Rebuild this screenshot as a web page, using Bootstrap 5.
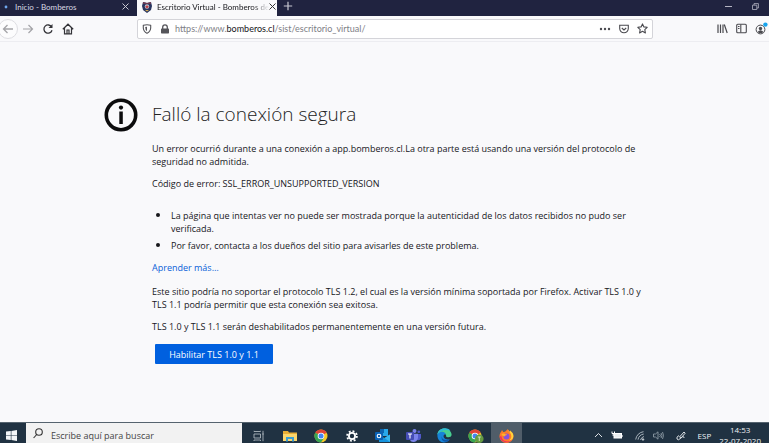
<!DOCTYPE html>
<html lang="es">
<head>
<meta charset="utf-8">
<meta name="viewport" content="width=device-width, initial-scale=1">
<title>Escritorio Virtual - Bomberos</title>
<link href="https://cdn.jsdelivr.net/npm/bootstrap@5.3.0/dist/css/bootstrap.min.css" rel="stylesheet">
<style>
body{font-family:"Open Sans","Noto Sans",sans-serif;font-size:9px;line-height:13px;color:#17171b;background:#f9f9fb}
svg{display:block;flex:none}
button{font:inherit}
.plain{border:0;background:none;padding:0;color:inherit;display:flex;align-items:center;justify-content:center;flex:none}
.tabstrip{background:#202340;height:16px;color:#d8d8e2;font-family:Lato,"Open Sans",sans-serif;font-size:8px;line-height:12px}
.tab-item{width:137px;height:16px;padding:0 8px 3px 4px}
.tab-item.current{background:#f9f9fb;color:#15151a;width:140px;padding-right:6px}
.tab-title{white-space:nowrap}
.current .tab-title{-webkit-mask-image:linear-gradient(90deg,#000 85%,transparent);mask-image:linear-gradient(90deg,#000 85%,transparent)}
.new-tab{padding:0 6px}
.window-buttons{gap:20px;padding-right:10px}
.toolbar{height:26px;border-bottom:1px solid #ededf1;color:#38383d;padding-right:1px}
.back{width:20px;height:20px;border:1px solid #dedee2;border-radius:50%;margin-left:-2px;background:#fcfcfd}
.urlbox{height:20px;border:1px solid #d4d4d9;border-radius:2px;background:#fff;margin-left:63px;margin-right:64px}
.address{color:#808086;font-family:Lato,"Open Sans",sans-serif;padding-left:5px}
.address b{color:#15151a;font-weight:400}
.error-page{padding:56px 127px 0 104px}
.error-text{padding-left:14px}
h1{font-weight:300;font-size:19px;line-height:32px;margin-bottom:12px;color:#222}
p{margin-bottom:9px}
.reasons{padding-left:19px;margin:18px 0 9px}
.reasons li{margin-bottom:3px}
.reasons li::marker{font-size:12px}
.more{margin-bottom:11px}
.learn{color:#0a5fd8;text-decoration:none}
.enable{background:#0060df;color:#fff;border-radius:1px;height:20px;width:118px;margin:11px 0 0 3px}
.taskbar{background:#203242;height:21px;color:#eef1f4;overflow:hidden;border-top:1px solid #55636e}
.start{width:26px;height:21px;padding-right:4px}
.search{width:216px;background:#f2f2f2;color:#333;height:21px;padding:4px 0 0 7px}
.search input{border:0;background:none;color:#333;outline:0;padding:0;font-size:9px;line-height:14px;height:16px;width:160px}
.search input::placeholder{color:#444;opacity:1}
.apps{margin-left:1px}
.apps .plain{width:31px;height:21px;padding-top:4px}
.apps .open-app{background:#505d69}
.tray{font-size:8px;line-height:11px}
.tray time{padding-top:1px}
</style>
</head>
<body class="d-flex flex-column min-vh-100 overflow-hidden">
<header>
<div class="tabstrip d-flex">
  <div class="tab-item d-flex align-items-center">
    <svg width="11" height="12" viewBox="0 0 11 12"><circle cx="2" cy="6" r="1.4" fill="#6fa8ef"/></svg>
    <span class="tab-title flex-grow-1">Inicio - Bomberos</span>
    <button class="plain" aria-label="Cerrar Inicio"><svg width="7" height="7" viewBox="0 0 7 7"><path d="M.5.5l6 6M6.500.5l-6 6" stroke="#c8c8d2"/></svg></button>
  </div>
  <div class="tab-item current d-flex align-items-center">
    <svg class="me-1" width="12" height="12" viewBox="0 0 12 12"><path d="M2 1l4 1 4-1 1 4-1 4-4 3-4-3-1-4z" fill="#283560"/><path d="M2 1l4 1 4-1v2H2z" fill="#6b3a52"/><circle cx="6" cy="5.500" r="2.200" fill="#c3c8d6"/><path d="M6 3.500l.6 1.400H8l-1 1 .4 1.600L6 6.700l-1.400.8L5 5.900 4 4.900h1.400z" fill="#c04145"/><path d="M4 9h4l-2 1.500z" fill="#d5aa52"/></svg>
    <span class="tab-title">Escritorio Virtual - Bomberos de</span>
    <button class="plain ms-auto" aria-label="Cerrar Escritorio Virtual"><svg width="7" height="7" viewBox="0 0 7 7"><path d="M.5.5l6 6M6.500.5l-6 6" stroke="#333"/></svg></button>
  </div>
  <button class="plain new-tab mb-1" aria-label="Nueva pestaña"><svg width="10" height="10" viewBox="0 0 10 10"><path d="M5 .8v8.400M.8 5h8.400" stroke="#c8c8d2" stroke-width="1.200"/></svg></button>
  <div class="window-buttons d-flex ms-auto mb-1">
    <button class="plain" aria-label="Minimizar"><svg width="7" height="7" viewBox="0 0 7 7"><path d="M0 3.500h7" stroke="#b5b5c3"/></svg></button>
    <button class="plain" aria-label="Restaurar"><svg width="7" height="7" viewBox="0 0 7 7" fill="none" stroke="#b5b5c3" stroke-width=".8"><path d="M.5 2.200h4.300v4.300H.5zM2 2V.6h4.400V5H5"/></svg></button>
  </div>
</div>
<nav class="toolbar d-flex align-items-center">
  <button class="plain back" aria-label="Atrás"><svg width="12" height="12" viewBox="0 0 12 12" fill="none" stroke="#a3a3a7" stroke-width="1.300"><path d="M11 6H1.500M5.500 2l-4 4 4 4"/></svg></button>
  <button class="plain ms-1" aria-label="Adelante"><svg width="12" height="12" viewBox="0 0 12 12" fill="none" stroke="#a3a3a7" stroke-width="1.200"><path d="M1 6h9.500M6.500 2l4 4-4 4"/></svg></button>
  <button class="plain ms-2" aria-label="Recargar"><svg width="12" height="12" viewBox="0 0 12 12" fill="none" stroke="#333338" stroke-width="1.300"><path d="M9.600 4A4.100 4.100 0 1 0 10 7.200"/><path d="M10.500 1v4h-4z" fill="#333338" stroke="none"/></svg></button>
  <button class="plain ms-2" aria-label="Inicio"><svg width="12" height="12" viewBox="0 0 12 12" fill="none" stroke="#333338" stroke-width="1.200"><path d="M.8 6.300L6 1.200l5.200 5.100M2.500 5v5.800h7V5M5 10.800V7h2v3.800"/></svg></button>
  <div class="urlbox d-flex align-items-center flex-grow-1 px-1">
    <svg width="10" height="10" viewBox="0 0 10 10" fill="none" stroke="#55555a" stroke-width="1.100"><path d="M1.300 1.300Q5 .3 8.700 1.300V4Q8.500 7.500 5 9.300 1.500 7.500 1.300 4z"/><path d="M5 2.800v4.500Q3.200 6 3.200 3z" fill="#55555a" stroke="none"/></svg>
    <svg class="ms-2" width="10" height="10" viewBox="0 0 10 10"><rect x="1" y="4.500" width="8" height="5" rx=".7" fill="#55555a"/><path d="M2.700 5V3.200a2.300 2.300 0 0 1 4.600 0V5" fill="none" stroke="#55555a" stroke-width="1.300"/></svg>
    <span class="address flex-grow-1 text-nowrap">https://www.<b>bomberos.cl</b>/sist/escritorio_virtual/</span>
    <button class="plain" aria-label="Más acciones"><svg width="12" height="10" viewBox="0 0 12 10" fill="#4a4a4f"><circle cx="2" cy="5" r="1.200"/><circle cx="6" cy="5" r="1.200"/><circle cx="10" cy="5" r="1.200"/></svg></button>
    <button class="plain ms-1 px-1" aria-label="Guardar en Pocket"><svg width="10" height="10" viewBox="0 0 10 10" fill="none" stroke="#4a4a4f" stroke-width="1.100"><path d="M.7 1.200h8.600v3.300a4.300 4.300 0 0 1-8.600 0zM2.800 4L5 6l2.200-2"/></svg></button>
    <button class="plain ms-1" aria-label="Marcador"><svg width="11" height="11" viewBox="0 0 11 11" fill="none" stroke="#4a4a4f" stroke-width="1.100"><path d="M5.500.9l1.400 3 3.300.4-2.400 2.300.6 3.300-2.900-1.600-2.900 1.600.6-3.300L.8 4.300l3.300-.4z" stroke-linejoin="round"/></svg></button>
  </div>
  <div class="d-flex align-items-center gap-2">
    <button class="plain" aria-label="Biblioteca"><svg width="11" height="11" viewBox="0 0 11 11" stroke="#4a4a4f" stroke-width="1.200"><path d="M1 1.500v8.500M3.500 1.500v8.500M6 1.500v8.500M7.300 1.500l2.900 8.500"/></svg></button>
    <button class="plain" aria-label="Barra lateral"><svg width="11" height="11" viewBox="0 0 11 11" fill="none" stroke="#4a4a4f" stroke-width="1.100"><rect x=".7" y="1.300" width="9.600" height="8.400" rx="1"/><path d="M4.800 1.500v8M2 3.500h1.500M2 5.500h1.500"/></svg></button>
    <button class="plain" aria-label="Cuenta"><svg width="13" height="14" viewBox="0 0 13 14"><circle cx="5.500" cy="7.500" r="4.400" fill="none" stroke="#4a4a4f"/><circle cx="5.500" cy="6.500" r="1.700" fill="#4a4a4f"/><path d="M2.500 10q3-3.500 6 0-3 2.500-6 0" fill="#4a4a4f"/><circle cx="10.400" cy="2.600" r="2.200" fill="#16a4ed"/></svg></button>
  </div>
</nav>
</header>

<main class="error-page d-flex align-items-start flex-grow-1">
  <svg width="34" height="34" viewBox="0 0 34 34"><circle cx="17" cy="17" r="14.700" fill="none" stroke="#0c0c0d" stroke-width="3.600"/><circle cx="17" cy="9.600" r="2.100" fill="#0c0c0d"/><rect x="15.300" y="13.500" width="3.500" height="12.500" fill="#0c0c0d"/></svg>
  <div class="error-text flex-grow-1">
    <h1>Falló la conexión segura</h1>
    <p>Un error ocurrió durante a una conexión a app.bomberos.cl.La otra parte está usando una versión del protocolo de seguridad no admitida.</p>
    <p>Código de error: SSL_ERROR_UNSUPPORTED_VERSION</p>
    <ul class="reasons">
      <li>La página que intentas ver no puede ser mostrada porque la autenticidad de los datos recibidos no pudo ser verificada.</li>
      <li>Por favor, contacta a los dueños del sitio para avisarles de este problema.</li>
    </ul>
    <p class="more"><a class="learn" href="#">Aprender más…</a></p>
    <p>Este sitio podría no soportar el protocolo TLS 1.2, el cual es la versión mínima soportada por Firefox. Activar TLS 1.0 y TLS 1.1 podría permitir que esta conexión sea exitosa.</p>
    <p>TLS 1.0 y TLS 1.1 serán deshabilitados permanentemente en una versión futura.</p>
    <button class="plain enable">Habilitar TLS 1.0 y 1.1</button>
  </div>
</main>

<footer class="taskbar d-flex">
  <button class="plain start pt-1" aria-label="Inicio de Windows"><svg width="11" height="11" viewBox="0 0 11 11" fill="#f4f6f8"><path d="M0 1.600L4.800 1v4.200H0zM5.400.9L11 0v5.200H5.400zM0 5.800h4.800V10L0 9.400zM5.400 5.800H11V11l-5.600-.9z"/></svg></button>
  <label class="search d-flex align-items-start"><svg class="me-2" width="10" height="12" viewBox="0 0 10 12" fill="none" stroke="#333" stroke-width="1.100"><circle cx="6" cy="5" r="3.300"/><path d="M3.700 7.500L.6 11"/></svg><input type="text" placeholder="Escribe aquí para buscar" aria-label="Buscar"></label>
  <div class="apps d-flex">
    <button class="plain" aria-label="Vista de tareas"><svg width="12" height="12" viewBox="0 0 12 12" fill="none" stroke="#aab4bc" stroke-width=".9"><path d="M1 1.500V.8M1 1.500h6.500M7.500.8v.7M1 4h6.500v4H1zM1 11v-1h6.500v1M10 .8v10.400M9.200 4h1.600"/></svg></button>
    <button class="plain" aria-label="Explorador"><svg width="14" height="12" viewBox="0 0 14 12"><path d="M0 1h5l1 1.500h8V11H0z" fill="#e9ae35"/><path d="M0 4h14v7H0z" fill="#fbd66c"/><path d="M3 7h8v4.500H9V9H5v2.500H3z" fill="#3c9fd2"/></svg></button>
    <button class="plain" aria-label="Chrome"><svg width="14" height="14" viewBox="0 0 14 14"><circle cx="7" cy="7" r="6.500" fill="#f6c928"/><path d="M7 7L1.400 3.700a6.500 6.500 0 0 1 11.200 0z" fill="#df4438"/><path d="M7 7L1.400 3.700A6.500 6.500 0 0 0 7 13.500l3-4.800z" fill="#37a553"/><circle cx="7" cy="7" r="3.300" fill="#fff"/><circle cx="7" cy="7" r="2.500" fill="#4285f4"/></svg></button>
    <button class="plain" aria-label="Configuración"><svg width="12" height="12" viewBox="0 0 12 12" fill="none" stroke="#fff"><circle cx="6" cy="6" r="3.100" stroke-width="1.800"/><circle cx="6" cy="6" r="4.900" stroke-width="1.800" stroke-dasharray="1.920 1.920"/></svg></button>
    <button class="plain" aria-label="Outlook"><svg width="15" height="13" viewBox="0 0 15 13"><path d="M5 0h8v7H5z" fill="#28a8ea"/><path d="M5 0h4v4H5z" fill="#0c65b2"/><path d="M4 6l5.500 3L15 5.500V13H4z" fill="#1593de"/><path d="M9.500 9L15 5.500V13z" fill="#37b7ee"/><rect y="3" width="8" height="8" rx="1" fill="#0a62b5"/><circle cx="4" cy="7" r="1.800" fill="none" stroke="#fff" stroke-width="1.100"/></svg></button>
    <button class="plain" aria-label="Teams"><svg width="15" height="13" viewBox="0 0 15 13"><circle cx="8.500" cy="2" r="2" fill="#7b83eb"/><circle cx="12.800" cy="2.800" r="1.400" fill="#5059c9"/><path d="M10 5h5v4q-1 3-4 2z" fill="#5059c9"/><path d="M4 4.800h8V9q-1 4-4.500 4T4 10z" fill="#7b83eb"/><rect y="3" width="8" height="8" rx="1" fill="#454db5"/><path d="M2 5h4M4 5v4.500" stroke="#fff" stroke-width="1.100"/></svg></button>
    <button class="plain" aria-label="Edge"><svg width="15" height="15" viewBox="0 0 15 15"><path d="M.4 6.500C1-1.500 13.500-1.500 14.600 6.500c.3 3-4.500 3.600-5.600 1.700C9.800 5.500 6 3.300.4 6.500z" fill="#48cf91"/><path d="M.4 6.500C2-1 12-1 13.300 3 9 1 5 2 .4 6.500z" fill="#2ebad5"/><path d="M.4 6.500C3 2.800 8 3 9 6.800 5.500 5.300 5 12 12.800 11.500 8 17 0 14.500.4 6.500z" fill="#1684d8"/><path d="M5.600 6.200C2.700 12 9 13 12.800 11.500 9 16.500 2 13 5.600 6.200z" fill="#0d55a7"/></svg></button>
    <button class="plain" aria-label="Chrome, perfil T"><svg width="16" height="14" viewBox="0 0 16 14"><circle cx="7" cy="7" r="6.500" fill="#f6c928"/><path d="M7 7L1.400 3.700a6.500 6.500 0 0 1 11.200 0z" fill="#df4438"/><path d="M7 7L1.400 3.700A6.500 6.500 0 0 0 7 13.500l3-4.800z" fill="#37a553"/><circle cx="7" cy="7" r="3.300" fill="#fff"/><circle cx="7" cy="7" r="2.500" fill="#4285f4"/><circle cx="11.300" cy="9.700" r="4.300" fill="#659b42"/><path d="M9.800 8h3M11.300 8v4" stroke="#d7e8c8" stroke-width=".9"/></svg></button>
    <button class="plain open-app" aria-label="Firefox"><svg width="15" height="14" viewBox="0 0 15 14"><path d="M2 3l1-2 1.300 2L6 2.800 9 0c0 1.300 1 2 2 3V1.600C13 3 14.500 5 14.500 7.500a7 6.400 0 0 1-14 0C.5 5.500 1 4 2 3z" fill="#ff7c27"/><path d="M9 0c0 3 3 3.500 3.300 7 .2 2-.8 3.500-2.300 4.500 5-.5 5.500-6 2.500-8.500L11 1.600V3C10 2 9 1.300 9 0z" fill="#ffd43c"/><path d="M.6 7A7 6.400 0 0 0 13 11C8 14 3 12 2.600 7.500z" fill="#f0335b"/><circle cx="7.500" cy="7.400" r="3" fill="#8751dc"/><path d="M2.500 5C5 3.500 6 5.500 8 5.200c0 1.200-2 1-2.600 2.400C4.500 7 3 7 2.500 5z" fill="#ffb12c"/></svg></button>
  </div>
  <div class="tray d-flex ms-auto gap-2 pe-2">
    <button class="plain" aria-label="Iconos ocultos"><svg class="mt-1" width="9" height="9" viewBox="0 0 9 9" fill="none" stroke="#dce1e5"><path d="M1 6l3.500-3.500L8 6"/></svg></button>
    <svg class="mt-2 me-1" width="12" height="9" viewBox="0 0 12 9"><rect x="3" y="2.500" width="7.500" height="4.500" fill="#e9edef" stroke="#fff"/><path d="M1 .5v2h2.500v-2M2.200 2.500V5" stroke="#fff" fill="none"/><path d="M11 4v2" stroke="#fff"/></svg>
    <svg class="mt-2" width="10" height="10" viewBox="0 0 10 10" fill="none" stroke="#b6c0c7" stroke-width=".9"><path d="M.7 8.500A9 9 0 0 1 8.500.7M3 8.700A7 7 0 0 1 8.700 3M5.500 9A5 5 0 0 1 9 5.500"/><circle cx="8" cy="8.500" r=".8" fill="#fff"/></svg>
    <svg class="mt-2 me-1" width="11" height="9" viewBox="0 0 11 9" fill="none" stroke="#8d9ba5" stroke-width=".9"><path d="M.5 3h2L5 .8v7.400L2.500 6h-2zM6.500 3l1 1.500-1 1.500M8 2l1 2.500L8 7M9.500 1l1 3.500-1 3.500"/></svg>
    <svg class="mt-2 me-1" width="10" height="10" viewBox="0 0 10 10" fill="none" stroke="#dce1e5"><path d="M3.500 6L8 1l1.200 1.200L5 7zM3 4.500Q0 6 1 8t4-1q3-3 3 0"/></svg>
    <button class="plain pt-1" aria-label="Idioma español">ESP</button>
    <time class="text-center text-nowrap">14:53<br>22-07-2020</time>
  </div>
</footer>
<script src="https://cdn.jsdelivr.net/npm/bootstrap@5.3.0/dist/js/bootstrap.bundle.min.js"></script>
</body>
</html>
